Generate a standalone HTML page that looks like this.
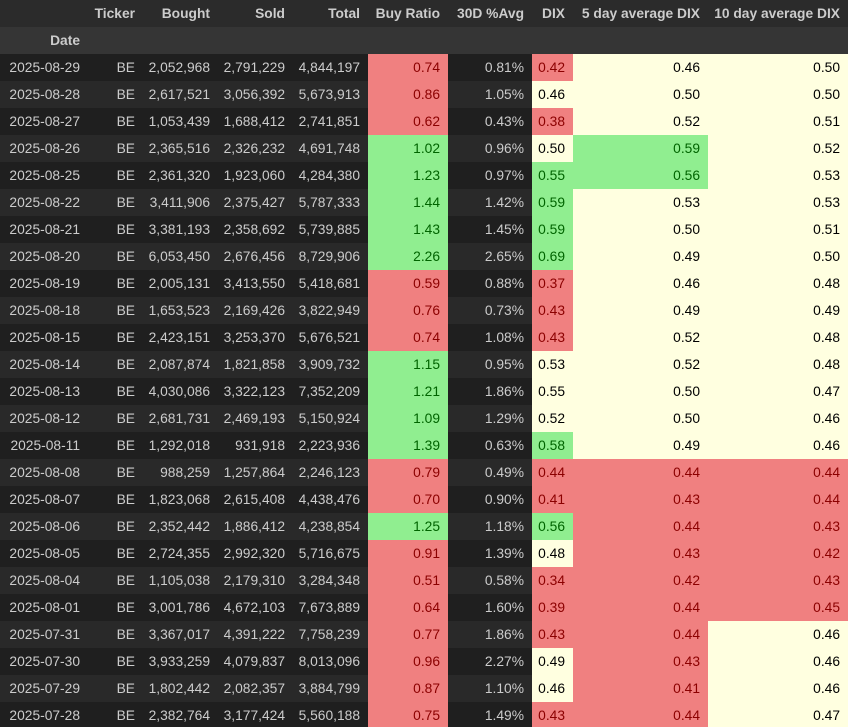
<!DOCTYPE html>
<html><head><meta charset="utf-8"><style>
html,body{margin:0;padding:0;background:#1f1f1f;width:848px;height:727px;overflow:hidden}
table{border-collapse:collapse;table-layout:fixed;width:848px;font-family:"Liberation Sans",sans-serif;font-size:13.8px;color:#cccccc}
td,th{padding:0 8px 0 0;text-align:right;height:27px;white-space:nowrap;overflow:hidden}
thead tr.h th{background:#2b2b2b;font-weight:bold;height:27px}
thead tr.d th{background:#353535;font-weight:bold;height:27px}
tbody tr:nth-child(odd) td{background:#1f1f1f}
tbody tr:nth-child(even) td{background:#292929}
tbody tr td.r{background:#f08080;color:#8b0000}
tbody tr td.g{background:#90ee90;color:#006400}
tbody tr td.y{background:#ffffe0;color:#000}
</style></head><body>
<table>
<colgroup><col style="width:88px"><col style="width:55px"><col style="width:75px"><col style="width:75px"><col style="width:75px"><col style="width:80px"><col style="width:84px"><col style="width:41px"><col style="width:135px"><col style="width:140px"></colgroup>
<thead>
<tr class="h"><th></th><th>Ticker</th><th>Bought</th><th>Sold</th><th>Total</th><th>Buy Ratio</th><th>30D %Avg</th><th>DIX</th><th>5 day average DIX</th><th>10 day average DIX</th></tr>
<tr class="d"><th>Date</th><th></th><th></th><th></th><th></th><th></th><th></th><th></th><th></th><th></th></tr>
</thead>
<tbody>
<tr><td>2025-08-29</td><td>BE</td><td>2,052,968</td><td>2,791,229</td><td>4,844,197</td><td class="r">0.74</td><td>0.81%</td><td class="r">0.42</td><td class="y">0.46</td><td class="y">0.50</td></tr>
<tr><td>2025-08-28</td><td>BE</td><td>2,617,521</td><td>3,056,392</td><td>5,673,913</td><td class="r">0.86</td><td>1.05%</td><td class="y">0.46</td><td class="y">0.50</td><td class="y">0.50</td></tr>
<tr><td>2025-08-27</td><td>BE</td><td>1,053,439</td><td>1,688,412</td><td>2,741,851</td><td class="r">0.62</td><td>0.43%</td><td class="r">0.38</td><td class="y">0.52</td><td class="y">0.51</td></tr>
<tr><td>2025-08-26</td><td>BE</td><td>2,365,516</td><td>2,326,232</td><td>4,691,748</td><td class="g">1.02</td><td>0.96%</td><td class="y">0.50</td><td class="g">0.59</td><td class="y">0.52</td></tr>
<tr><td>2025-08-25</td><td>BE</td><td>2,361,320</td><td>1,923,060</td><td>4,284,380</td><td class="g">1.23</td><td>0.97%</td><td class="g">0.55</td><td class="g">0.56</td><td class="y">0.53</td></tr>
<tr><td>2025-08-22</td><td>BE</td><td>3,411,906</td><td>2,375,427</td><td>5,787,333</td><td class="g">1.44</td><td>1.42%</td><td class="g">0.59</td><td class="y">0.53</td><td class="y">0.53</td></tr>
<tr><td>2025-08-21</td><td>BE</td><td>3,381,193</td><td>2,358,692</td><td>5,739,885</td><td class="g">1.43</td><td>1.45%</td><td class="g">0.59</td><td class="y">0.50</td><td class="y">0.51</td></tr>
<tr><td>2025-08-20</td><td>BE</td><td>6,053,450</td><td>2,676,456</td><td>8,729,906</td><td class="g">2.26</td><td>2.65%</td><td class="g">0.69</td><td class="y">0.49</td><td class="y">0.50</td></tr>
<tr><td>2025-08-19</td><td>BE</td><td>2,005,131</td><td>3,413,550</td><td>5,418,681</td><td class="r">0.59</td><td>0.88%</td><td class="r">0.37</td><td class="y">0.46</td><td class="y">0.48</td></tr>
<tr><td>2025-08-18</td><td>BE</td><td>1,653,523</td><td>2,169,426</td><td>3,822,949</td><td class="r">0.76</td><td>0.73%</td><td class="r">0.43</td><td class="y">0.49</td><td class="y">0.49</td></tr>
<tr><td>2025-08-15</td><td>BE</td><td>2,423,151</td><td>3,253,370</td><td>5,676,521</td><td class="r">0.74</td><td>1.08%</td><td class="r">0.43</td><td class="y">0.52</td><td class="y">0.48</td></tr>
<tr><td>2025-08-14</td><td>BE</td><td>2,087,874</td><td>1,821,858</td><td>3,909,732</td><td class="g">1.15</td><td>0.95%</td><td class="y">0.53</td><td class="y">0.52</td><td class="y">0.48</td></tr>
<tr><td>2025-08-13</td><td>BE</td><td>4,030,086</td><td>3,322,123</td><td>7,352,209</td><td class="g">1.21</td><td>1.86%</td><td class="y">0.55</td><td class="y">0.50</td><td class="y">0.47</td></tr>
<tr><td>2025-08-12</td><td>BE</td><td>2,681,731</td><td>2,469,193</td><td>5,150,924</td><td class="g">1.09</td><td>1.29%</td><td class="y">0.52</td><td class="y">0.50</td><td class="y">0.46</td></tr>
<tr><td>2025-08-11</td><td>BE</td><td>1,292,018</td><td>931,918</td><td>2,223,936</td><td class="g">1.39</td><td>0.63%</td><td class="g">0.58</td><td class="y">0.49</td><td class="y">0.46</td></tr>
<tr><td>2025-08-08</td><td>BE</td><td>988,259</td><td>1,257,864</td><td>2,246,123</td><td class="r">0.79</td><td>0.49%</td><td class="r">0.44</td><td class="r">0.44</td><td class="r">0.44</td></tr>
<tr><td>2025-08-07</td><td>BE</td><td>1,823,068</td><td>2,615,408</td><td>4,438,476</td><td class="r">0.70</td><td>0.90%</td><td class="r">0.41</td><td class="r">0.43</td><td class="r">0.44</td></tr>
<tr><td>2025-08-06</td><td>BE</td><td>2,352,442</td><td>1,886,412</td><td>4,238,854</td><td class="g">1.25</td><td>1.18%</td><td class="g">0.56</td><td class="r">0.44</td><td class="r">0.43</td></tr>
<tr><td>2025-08-05</td><td>BE</td><td>2,724,355</td><td>2,992,320</td><td>5,716,675</td><td class="r">0.91</td><td>1.39%</td><td class="y">0.48</td><td class="r">0.43</td><td class="r">0.42</td></tr>
<tr><td>2025-08-04</td><td>BE</td><td>1,105,038</td><td>2,179,310</td><td>3,284,348</td><td class="r">0.51</td><td>0.58%</td><td class="r">0.34</td><td class="r">0.42</td><td class="r">0.43</td></tr>
<tr><td>2025-08-01</td><td>BE</td><td>3,001,786</td><td>4,672,103</td><td>7,673,889</td><td class="r">0.64</td><td>1.60%</td><td class="r">0.39</td><td class="r">0.44</td><td class="r">0.45</td></tr>
<tr><td>2025-07-31</td><td>BE</td><td>3,367,017</td><td>4,391,222</td><td>7,758,239</td><td class="r">0.77</td><td>1.86%</td><td class="r">0.43</td><td class="r">0.44</td><td class="y">0.46</td></tr>
<tr><td>2025-07-30</td><td>BE</td><td>3,933,259</td><td>4,079,837</td><td>8,013,096</td><td class="r">0.96</td><td>2.27%</td><td class="y">0.49</td><td class="r">0.43</td><td class="y">0.46</td></tr>
<tr><td>2025-07-29</td><td>BE</td><td>1,802,442</td><td>2,082,357</td><td>3,884,799</td><td class="r">0.87</td><td>1.10%</td><td class="y">0.46</td><td class="r">0.41</td><td class="y">0.46</td></tr>
<tr><td>2025-07-28</td><td>BE</td><td>2,382,764</td><td>3,177,424</td><td>5,560,188</td><td class="r">0.75</td><td>1.49%</td><td class="r">0.43</td><td class="r">0.44</td><td class="y">0.47</td></tr>
</tbody>
</table>
</body></html>
